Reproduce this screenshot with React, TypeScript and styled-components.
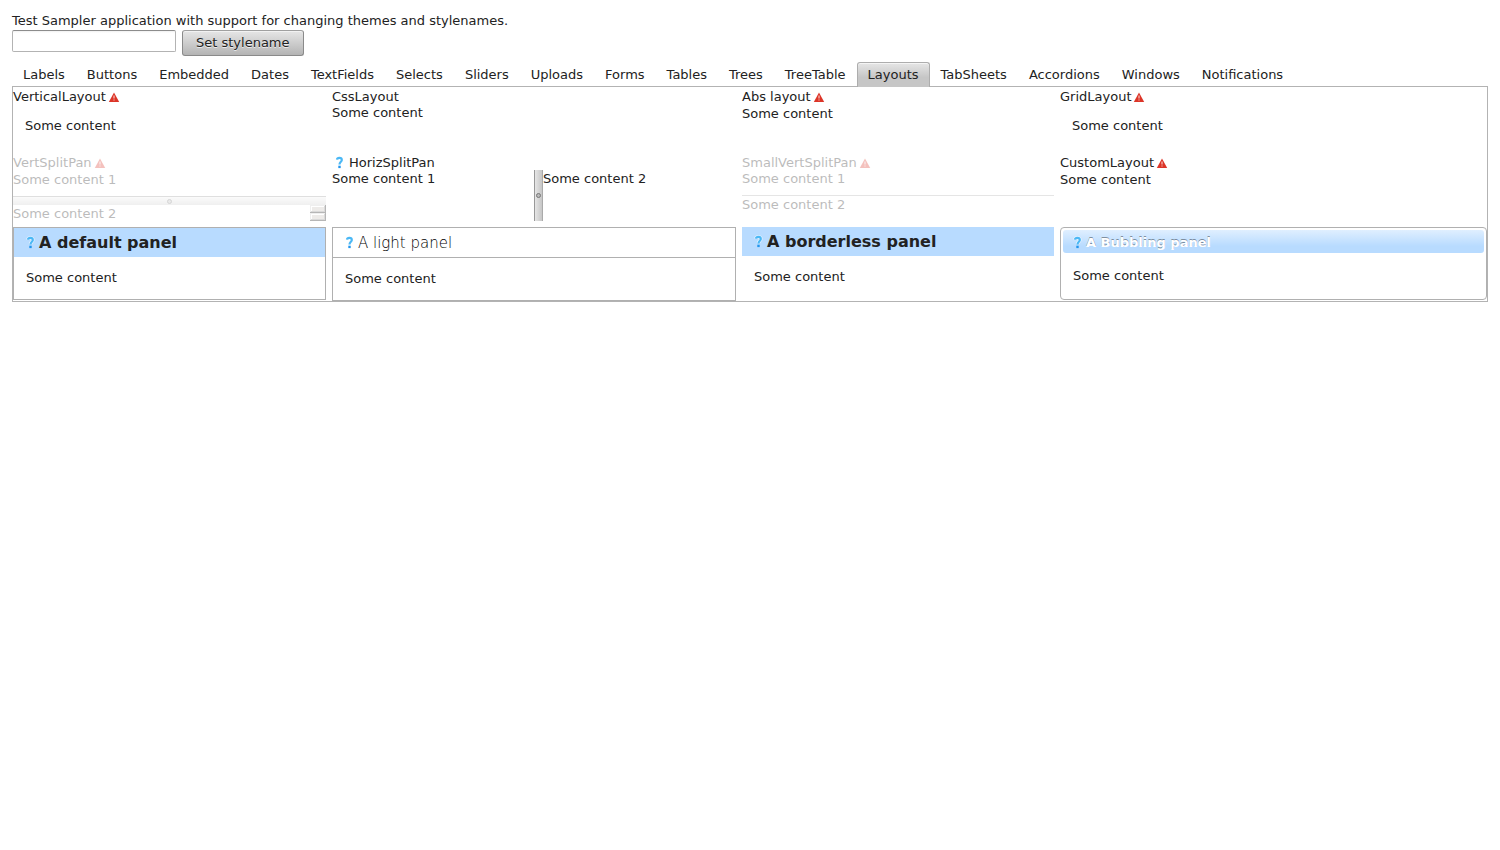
import React from "react";
import styled, { createGlobalStyle, css } from "styled-components";

const GlobalStyle = createGlobalStyle`
  * { box-sizing: border-box; }
  body {
    margin: 0;
    background: #fff;
    color: #222;
    font: 13px/18px "DejaVu Sans", Verdana, sans-serif;
  }
  h2, p { margin: 0; padding: 0; }
`;

const Page = styled.main`
  padding: 12px;
`;

const Toolbar = styled.form`
  display: flex;
  align-items: flex-start;
  gap: 6px;
`;

const StyleInput = styled.input`
  width: 164px;
  height: 22px;
  padding: 2px;
  border: 1px solid #b3b3b3;
  border-top-color: #8c8c8c;
  border-radius: 2px;
  font: inherit;
  background: linear-gradient(#f0f0f0, #fff 2px);
`;

const StyleButton = styled.button`
  height: 26px;
  padding: 0 13px;
  border: 1px solid #8a8a8a;
  border-top-color: #a0a0a0;
  border-radius: 3px;
  background: linear-gradient(#e6e6e6, #b4b4b4);
  box-shadow: inset 0 1px 0 #f2f2f2;
  color: #222;
  font: inherit;
  text-shadow: 0 1px 0 rgba(255, 255, 255, 0.7);
`;

const Tabs = styled.nav`
  display: flex;
  padding-top: 6px;
  margin-bottom: -1px;
`;

const Tab = styled.button<{ $selected: boolean }>`
  height: 25px;
  padding: 0 10px;
  border: 1px solid transparent;
  border-bottom: 0;
  border-radius: 3px 3px 0 0;
  background: none;
  color: inherit;
  font: inherit;
  white-space: nowrap;
  ${(p) =>
    p.$selected &&
    css`
      position: relative;
      border-color: #adadad;
      background: linear-gradient(#e6e6e6, #c6c6c6 60%);
      box-shadow: inset 0 1px 0 #f4f4f4;
    `}
`;

const Sheet = styled.section`
  display: grid;
  grid-template-columns: 313fr 404fr 312fr 427fr;
  grid-template-rows: 60px 68px auto;
  gap: 6px;
  border: 1px solid #b3b3b3;
`;

const Cell = styled.div<{ $disabled?: boolean }>`
  display: flex;
  flex-direction: column;
  min-width: 0;
  padding-top: 1px;
  opacity: ${(p) => (p.$disabled ? 0.3 : 1)};
`;

const Caption = styled.div<{ $tall?: boolean }>`
  display: flex;
  align-items: flex-start;
  gap: 1px;
  height: ${(p) => (p.$tall ? 17 : 16)}px;
  flex: none;

  svg {
    margin-top: 4px;
  }
`;

const CaptionIcon = styled.span`
  display: flex;
  padding: 0 4px 0 3px;

  svg {
    margin-top: 2px;
  }
`;

const Padded = styled.p`
  padding: 12px;
`;

const VerticalSplit = styled.div`
  flex: 1;
  min-height: 0;
  display: flex;
  flex-direction: column;
`;

const Pane = styled.div`
  flex: 1;
  min-height: 0;
  display: flex;
  justify-content: space-between;
`;

const FirstPane = styled.div`
  height: 25px;
`;

const VerticalHandle = styled.div`
  display: flex;
  justify-content: center;
  align-items: center;
  height: 9px;
  border-top: 1px solid #999;
  background: linear-gradient(#f2f2f2, #cecece);
`;

const SmallHandle = styled.div`
  height: 1px;
  background: #aaa;
`;

const HorizontalSplit = styled.div`
  flex: 1;
  display: grid;
  grid-template-columns: 50% 9px 1fr;
`;

const HorizontalHandle = styled.div`
  display: flex;
  justify-content: center;
  align-items: center;
  border-left: 1px solid #999;
  border-right: 1px solid #aaa;
  background: linear-gradient(90deg, #e6e6e6, #c6c6c6);
`;

const Knob = styled.span`
  width: 5px;
  height: 5px;
  border: 1px solid #777;
  border-radius: 50%;
  background: #bbb;
`;

const ScrollButtons = styled.div`
  display: flex;
  flex-direction: column;
  width: 16px;
  height: 16px;
`;

const ScrollStep = styled.span`
  flex: 1;
  background: #c4c0b8;
  box-shadow: inset -1px -1px 0 #111, inset 1px 1px 0 #ccc,
    inset -2px -2px 0 #888, inset 2px 2px 0 #fff;
`;

type PanelKind = "default" | "light" | "borderless" | "bubble";

const PanelBox = styled.article<{ $kind: PanelKind }>`
  align-self: start;
  border: ${(p) => (p.$kind === "borderless" ? "0" : "1px solid #b0b0b0")};
  border-radius: ${(p) => (p.$kind === "bubble" ? 4 : 0)}px;
  padding: ${(p) => (p.$kind === "bubble" ? "2px 2px 0" : "0")};
`;

const PanelCaption = styled.h2<{ $kind: PanelKind }>`
  display: flex;
  align-items: center;
  gap: 4px;
  height: 29px;
  padding: 0 12px;
  background: #b8dbff;
  font-size: 16px;
  font-weight: 700;
  line-height: 20px;
  ${(p) =>
    p.$kind === "light" &&
    css`
      height: 30px;
      border-bottom: 1px solid #b0b0b0;
      background: none;
      color: #000;
      font-size: 15px;
      font-weight: 200;
    `}
  ${(p) =>
    p.$kind === "bubble" &&
    css`
      height: 23px;
      padding: 2px 10px 0;
      border-radius: 3px;
      background: linear-gradient(#e0efff, #b8dbff 70%);
      color: #fff;
      font-size: 13px;
      text-shadow: 0 -1px 0 rgba(0, 0, 0, 0.4);
    `}
`;

const PanelContent = styled.p<{ $kind: PanelKind }>`
  padding: ${(p) => (p.$kind === "bubble" ? "14px 10px" : "12px")};
`;

const WarningIcon = () => (
  <svg width="13" height="10" viewBox="0 0 13 10" aria-hidden="true">
    <path d="M7 0.500 L12.200 10 H1.800 Z" fill="#dc3528" />
    <path d="M7 3.500 V6.500 M7 7.500 V8.500" stroke="#fff" strokeOpacity=".85" strokeWidth="1" />
  </svg>
);

const QuestionIcon = () => (
  <svg width="9" height="13" viewBox="0 0 9 13" aria-hidden="true">
    <path
      d="M2 3.700 C2.200 1.500 6.800 1.300 6.800 4 C6.800 5.800 4.500 5.700 4.500 8.300"
      fill="none" stroke="#fff" strokeOpacity=".7" strokeWidth="3.500"
    />
    <path
      d="M2 3.700 C2.200 1.300 6.800 1.100 6.800 4 C6.800 5.800 4.500 5.700 4.500 8.500"
      fill="none" stroke="#4bb8f5" strokeWidth="2.200"
    />
    <rect x="3.300" y="9.700" width="2.400" height="2.400" fill="#2196ee" />
  </svg>
);

const Panel = ({ kind, title }: { kind: PanelKind; title: string }) => (
  <PanelBox $kind={kind}>
    <PanelCaption $kind={kind}>
      <QuestionIcon />
      {title}
    </PanelCaption>
    <PanelContent $kind={kind}>Some content</PanelContent>
  </PanelBox>
);

const tabs = [
  "Labels", "Buttons", "Embedded", "Dates", "TextFields", "Selects", "Sliders",
  "Uploads", "Forms", "Tables", "Trees", "TreeTable", "Layouts", "TabSheets",
  "Accordions", "Windows", "Notifications",
];

export default function App() {
  const [selected, setSelected] = React.useState("Layouts");
  return (
    <Page>
      <GlobalStyle />
      <p>Test Sampler application with support for changing themes and stylenames.</p>
      <Toolbar onSubmit={(e) => e.preventDefault()}>
        <StyleInput aria-label="Stylename" />
        <StyleButton>Set stylename</StyleButton>
      </Toolbar>
      <Tabs>
        {tabs.map((t) => (
          <Tab key={t} $selected={t === selected} onClick={() => setSelected(t)}>
            {t}
          </Tab>
        ))}
      </Tabs>
      <Sheet>
        <Cell>
          <Caption $tall>VerticalLayout<WarningIcon /></Caption>
          <Padded>Some content</Padded>
        </Cell>
        <Cell>
          <Caption>CssLayout</Caption>
          <p>Some content</p>
        </Cell>
        <Cell>
          <Caption $tall>Abs layout<WarningIcon /></Caption>
          <p>Some content</p>
        </Cell>
        <Cell>
          <Caption $tall>GridLayout<WarningIcon /></Caption>
          <Padded>Some content</Padded>
        </Cell>

        <Cell $disabled>
          <Caption $tall>VertSplitPan<WarningIcon /></Caption>
          <VerticalSplit>
            <FirstPane>Some content 1</FirstPane>
            <VerticalHandle><Knob /></VerticalHandle>
            <Pane>
              Some content 2
              <ScrollButtons><ScrollStep /><ScrollStep /></ScrollButtons>
            </Pane>
          </VerticalSplit>
        </Cell>
        <Cell>
          <Caption><CaptionIcon><QuestionIcon /></CaptionIcon>HorizSplitPan</Caption>
          <HorizontalSplit>
            <div>Some content 1</div>
            <HorizontalHandle><Knob /></HorizontalHandle>
            <div>Some content 2</div>
          </HorizontalSplit>
        </Cell>
        <Cell $disabled>
          <Caption>SmallVertSplitPan<WarningIcon /></Caption>
          <VerticalSplit>
            <FirstPane>Some content 1</FirstPane>
            <SmallHandle />
            <Pane>Some content 2</Pane>
          </VerticalSplit>
        </Cell>
        <Cell>
          <Caption $tall>CustomLayout<WarningIcon /></Caption>
          <p>Some content</p>
        </Cell>

        <Panel kind="default" title="A default panel" />
        <Panel kind="light" title="A light panel" />
        <Panel kind="borderless" title="A borderless panel" />
        <Panel kind="bubble" title="A Bubbling panel" />
      </Sheet>
    </Page>
  );
}
